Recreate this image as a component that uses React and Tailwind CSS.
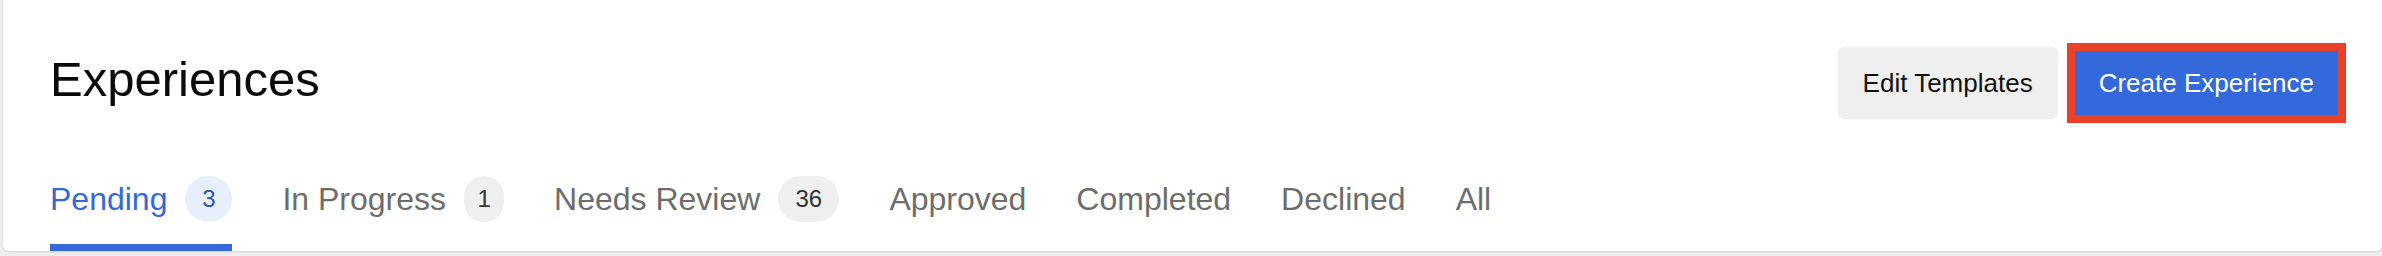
import React from "react";

const TABS = [
  { label: "Pending", count: 3, badgeWidth: "w-[47px]", active: true },
  { label: "In Progress", count: 1, badgeWidth: "w-[40px]" },
  { label: "Needs Review", count: 36, badgeWidth: "w-[61px]" },
  { label: "Approved" },
  { label: "Completed" },
  { label: "Declined" },
  { label: "All" },
];

function Tab({ tab }) {
  return (
    <div className="flex flex-col">
      <div className="flex items-center gap-[18px] h-[46px]">
        <span
          className={
            tab.active
              ? "text-[32px] leading-none text-[#3468d8]"
              : "text-[32px] leading-none text-[#6d6d6d]"
          }
        >
          {tab.label}
        </span>
        {tab.count !== undefined && (
          <span
            className={
              (tab.active
                ? "bg-[#e8effc] text-[#2b55b8] "
                : "bg-[#efefef] text-[#333333] ") +
              tab.badgeWidth +
              " h-[46px] rounded-full flex items-center justify-center text-[24px] leading-none"
            }
          >
            {tab.count}
          </span>
        )}
      </div>
      <div
        className={
          tab.active ? "mt-[22px] h-[7px] bg-[#3468db]" : "mt-[22px] h-[7px]"
        }
      />
    </div>
  );
}

export default function App() {
  return (
    <div
      className="min-h-screen bg-[#efefef]"
      style={{ fontFamily: '"Liberation Sans", Arial, sans-serif' }}
    >
      <div className="ml-[3px] bg-white rounded-b-md shadow-sm pl-[47px] pr-[40px] pt-[47px]">
        <div className="flex justify-between items-start">
          <h1 className="mt-[8px] text-[49px] leading-none text-[#0a0a0a]">
            Experiences
          </h1>
          <div className="flex items-center gap-[13px]">
            <button className="h-[72px] px-[25px] rounded-md bg-[#efefef] text-[26px] text-[#111111]">
              Edit Templates
            </button>
            <button className="h-[72px] px-[24px] bg-[#3469db] text-white text-[26px] border-4 border-[#e8412a] outline-4 outline-[#e8412a]">
              Create Experience
            </button>
          </div>
        </div>
        <div className="mt-[57px] flex gap-[50px]">
          {TABS.map((tab) => (
            <Tab key={tab.label} tab={tab} />
          ))}
        </div>
      </div>
    </div>
  );
}
